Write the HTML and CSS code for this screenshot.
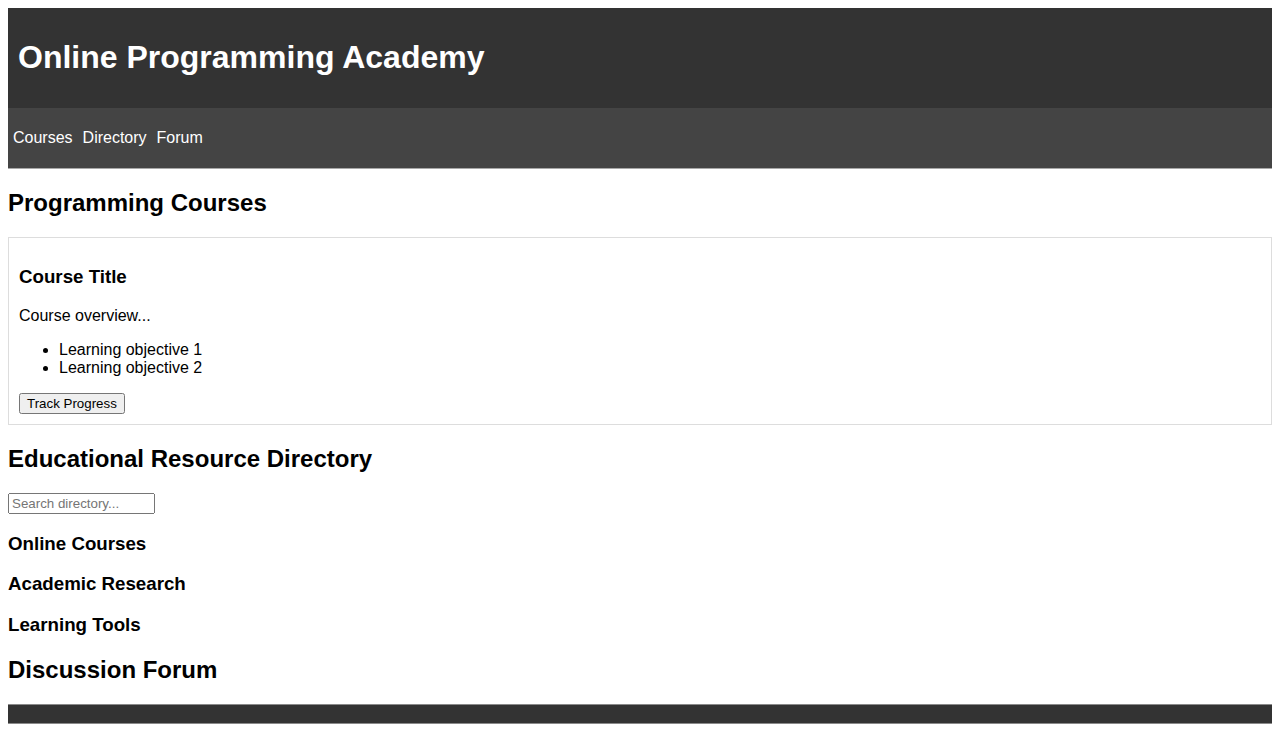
FILE: index.html
```html
<!DOCTYPE html>
<html lang="en">
<head>
<meta charset="utf-8">
<title>Online Programming Academy</title>
<link rel="stylesheet" href="styles.css">
</head>
<body>
<header class="site-header">
  <h1 class="site-title">Online Programming Academy</h1>
</header>
<nav class="site-nav">
  <ul class="nav-list">
    <li><a href="#courses" class="nav-link">Courses</a></li>
    <li><a href="#directory" class="nav-link">Directory</a></li>
    <li><a href="#forum" class="nav-link">Forum</a></li>
  </ul>
</nav>
<main class="content">
  <section id="courses" class="section">
    <h2 class="section-title">Programming Courses</h2>
    <div class="course-list">
      <article class="course-card">
        <h3 class="course-title">Course Title</h3>
        <p class="course-overview">Course overview...</p>
        <ul class="objectives">
          <li>Learning objective 1</li>
          <li>Learning objective 2</li>
        </ul>
        <button class="track-btn" type="button">Track Progress</button>
      </article>
    </div>
  </section>
  <section id="directory" class="section">
    <h2 class="section-title">Educational Resource Directory</h2>
    <div class="search-row">
      <input class="search-input" type="text" placeholder="Search directory...">
    </div>
    <div class="category"><h3 class="category-title">Online Courses</h3></div>
    <div class="category"><h3 class="category-title">Academic Research</h3></div>
    <div class="category"><h3 class="category-title">Learning Tools</h3></div>
  </section>
  <section id="forum" class="section">
    <h2 class="section-title">Discussion Forum</h2>
  </section>
</main>
<footer class="site-footer"></footer>
</body>
</html>
```

FILE: styles.css
```css
body {
  margin: 8px;
  font-family: "Liberation Sans", Arial, sans-serif;
  color: #000;
  background: #fff;
}

.site-header {
  background: #333;
  color: #fff;
  padding: 10px;
}

.site-title {
  font-size: 32px;
  margin: 21.44px 0;
}

.site-nav {
  background: #444;
  padding: 21px 0;
  border-bottom: 1px solid #a8a8a8;
}

.nav-list {
  list-style: none;
  margin: 0;
  padding: 0;
  display: flex;
}

.nav-link {
  display: block;
  padding: 0 5px;
  color: #fff;
  text-decoration: none;
  font-size: 16px;
}

.section-title {
  font-size: 24px;
  margin: 19.92px 0;
}

.course-card {
  border: 1px solid #ddd;
  padding: 10px;
}

.course-title,
.category-title {
  font-size: 18.72px;
  margin: 18.72px 0;
}

.course-overview {
  margin: 16px 0;
}

.objectives {
  margin: 16px 0;
  padding-left: 40px;
}

.track-btn {
  font-family: "Liberation Sans", Arial, sans-serif;
  font-size: 13.333px;
}

.search-input {
  font-family: "Liberation Sans", Arial, sans-serif;
  font-size: 13.333px;
  width: 139px;
}

.site-footer {
  margin-top: 0;
  background: #333;
  height: 18px;
  border-top: 1px solid #8a8a8a;
  border-bottom: 1px solid #8a8a8a;
}
```
